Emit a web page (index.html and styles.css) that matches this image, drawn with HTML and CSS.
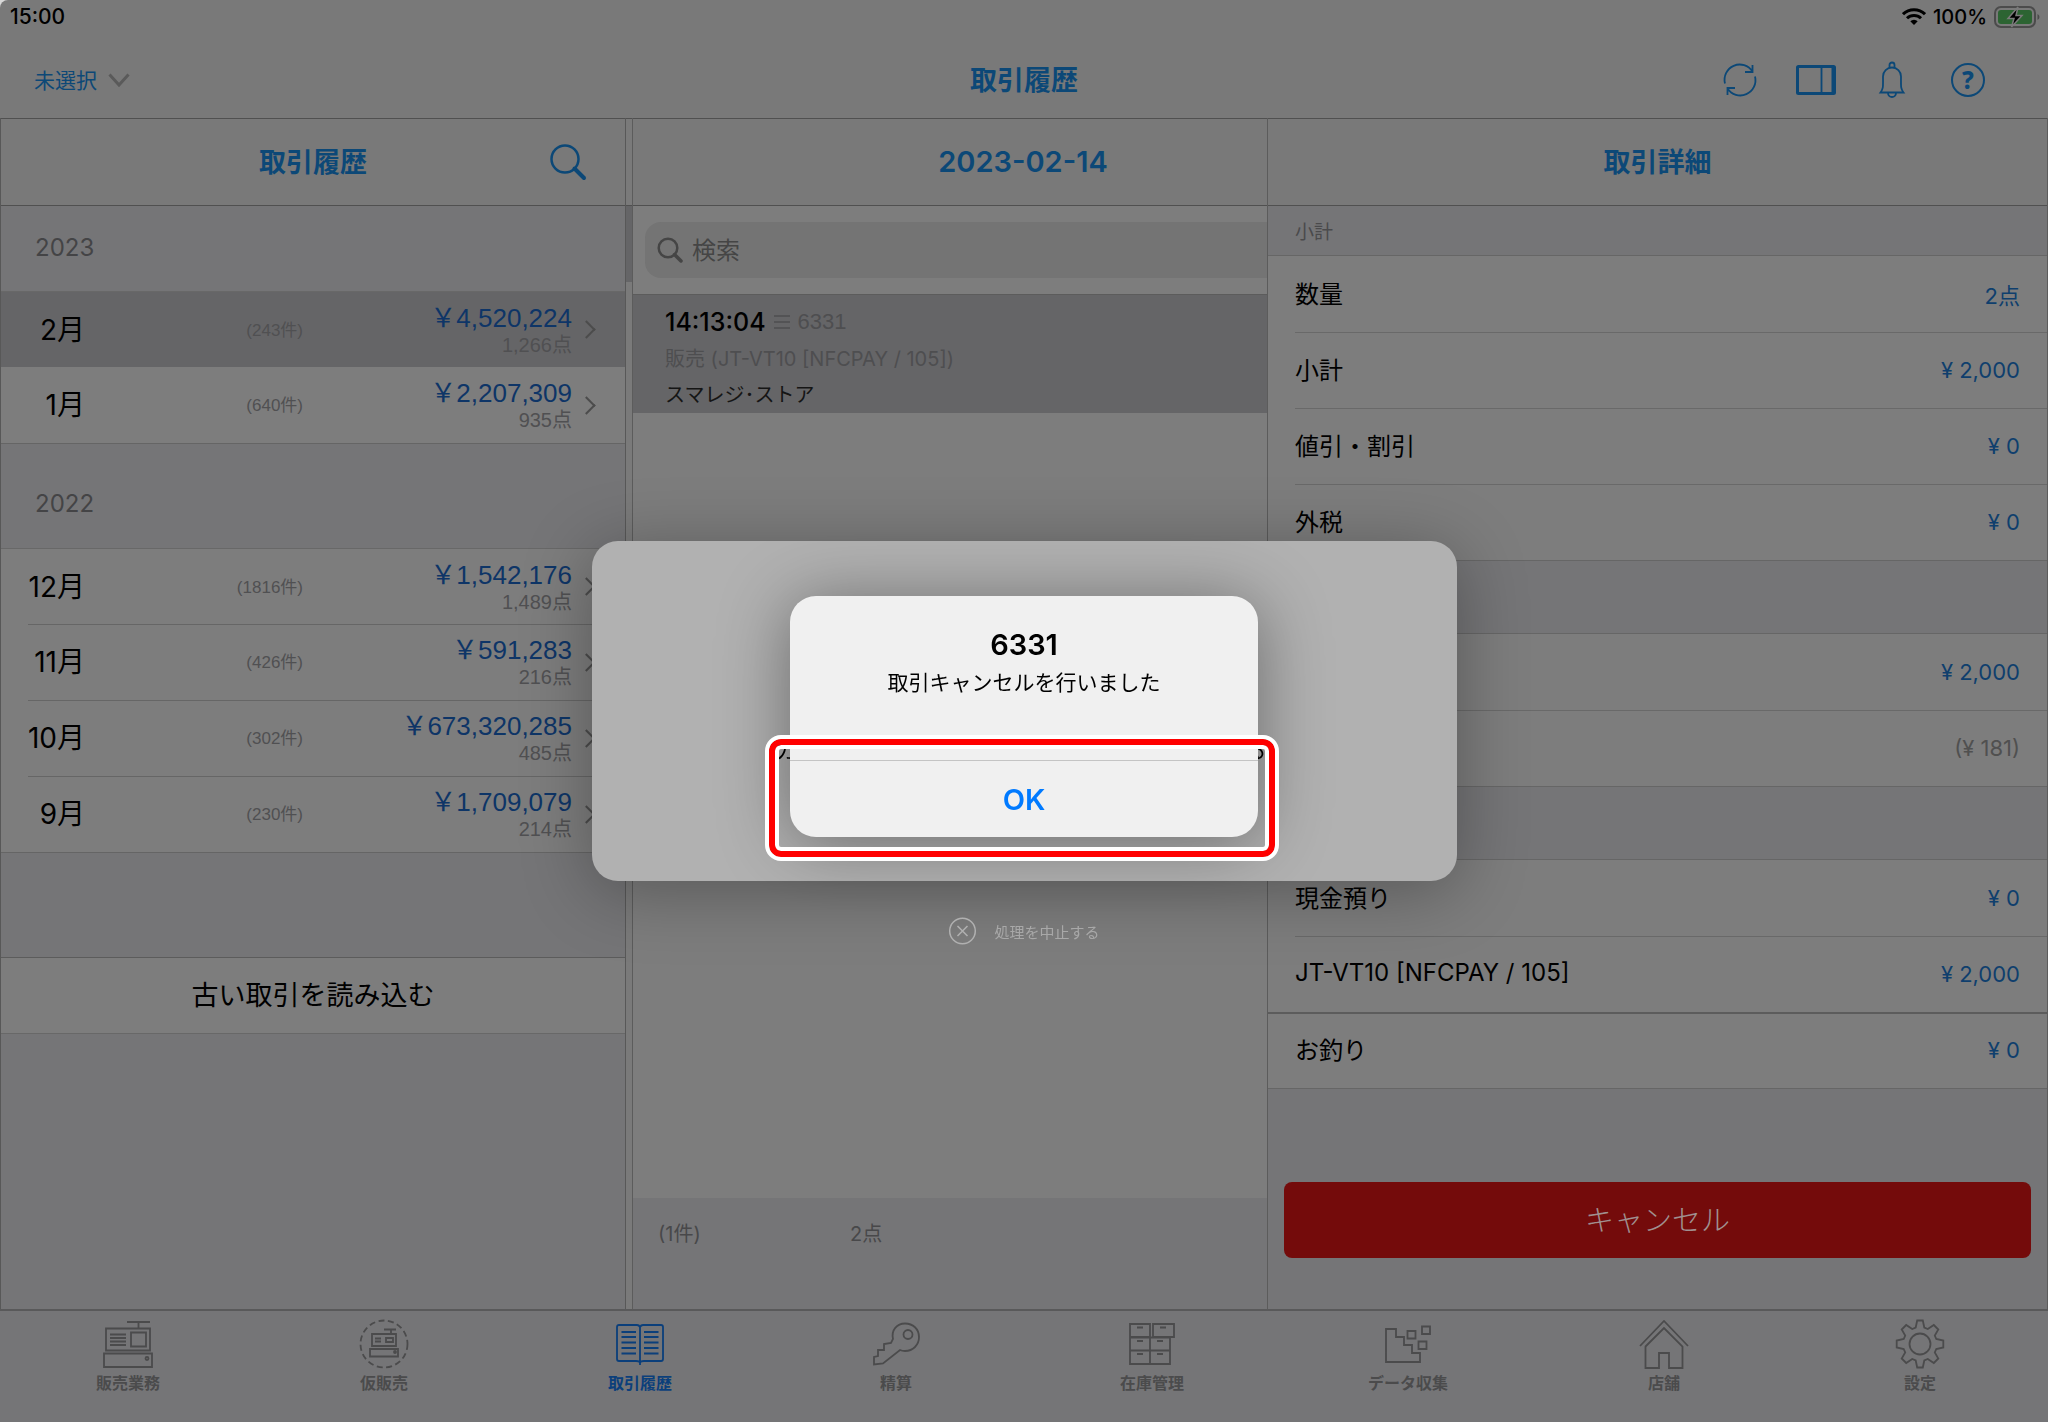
FILE: index.html
```
<!doctype html>
<html lang="ja">
<head>
  <meta charset="utf-8">
  <title>取引履歴</title>
  <link rel="stylesheet" href="styles.css">
</head>

<body>
  <div class="app">
    <header class="top">
      <div class="status">
        <span>15:00</span>
        <span class="status-right">
          <svg width="24" height="18" viewBox="0 0 24 18" fill="none" stroke="#000" stroke-width="3"><path d="M1 6.2a15.6 15.6 0 0 1 22 0M5 10.3a10 10 0 0 1 14 0"/><path d="M8.3 13.2a5.3 5.3 0 0 1 7.4 0L12 17z" fill="#000" stroke="none"/></svg>
          <span>100%</span>
          <svg class="battery" width="47" height="22" viewBox="0 0 47 22"><rect x="1" y="1" width="40" height="20" rx="6" fill="none" stroke="#4b4b4b" stroke-width="2"/><rect x="4" y="4" width="34" height="14" rx="3" fill="#2c6432"/><path d="M43.5 8v6q2-1 2-3t-2-3z" fill="#4b4b4b"/><path d="M24 1l-10 11.5h6L17.500 21 28 9.500h-6z" fill="#000" stroke="#7a7a7a" stroke-width="1.500"/></svg>
        </span>
      </div>
      <div class="titlebar">
        <div class="picker">
          <select aria-label="店舗の選択"><option>未選択</option></select>
          <svg width="22" height="16" viewBox="0 0 22 16" fill="none" stroke="#5a5a5a" stroke-width="3"><path d="M1.500 2.500L11 13l9.500-10.500"/></svg>
        </div>
        <h1>取引履歴</h1>
        <div class="tools">
          <button aria-label="更新"><svg width="36" height="36" viewBox="0 0 36 36"><path d="M3 21.500A15.200 15.200 0 0 1 30.500 9.500M33 14.500A15.200 15.200 0 0 1 5.500 26.500M30.500 3v7h-7.500M5.500 33v-7H13"/></svg></button>
          <button aria-label="表示"><svg width="40" height="30" viewBox="0 0 40 30"><rect x="1.500" y="1.500" width="37" height="27" rx="1" stroke-width="3"/><path d="M25.500 2v26"/><path d="M37 2v26" stroke-width="3"/></svg></button>
          <button aria-label="通知"><svg width="28" height="38" viewBox="0 0 28 38"><path d="M2.500 31.500c3-4 2.500-6 2.500-16a9 9 0 0 1 18 0c0 10-.5 12 2.500 16zM11.500 7V4a2.500 2.500 0 0 1 5 0v3M10 32a4 4 0 0 0 8 0"/></svg></button>
          <button aria-label="ヘルプ" class="help"><span>?</span></button>
        </div>
      </div>
    </header>

    <main class="columns">
      <section class="col col-left">
        <header class="col-head">
          <h2>取引履歴</h2>
          <button class="head-search" aria-label="検索"><svg width="38" height="38" viewBox="0 0 38 38" fill="none" stroke="#0c4877" stroke-width="2.500"><circle cx="16" cy="16" r="13.500"/><path d="M25.500 25.500l9.500 9.500" stroke-width="4" stroke-linecap="round"/></svg></button>
        </header>
        <h3 class="year">2023</h3>
        <ul class="months">
          <li class="selected"><button><b>2月</b><small>(243件)</small><span class="sum">￥4,520,224<em>1,266点</em></span><i></i></button></li>
          <li><button><b>1月</b><small>(640件)</small><span class="sum">￥2,207,309<em>935点</em></span><i></i></button></li>
        </ul>
        <h3 class="year year-next">2022</h3>
        <ul class="months">
          <li><button><b>12月</b><small>(1816件)</small><span class="sum">￥1,542,176<em>1,489点</em></span><i></i></button></li>
          <li><button><b>11月</b><small>(426件)</small><span class="sum">￥591,283<em>216点</em></span><i></i></button></li>
          <li><button><b>10月</b><small>(302件)</small><span class="sum">￥673,320,285<em>485点</em></span><i></i></button></li>
          <li><button><b>9月</b><small>(230件)</small><span class="sum">￥1,709,079<em>214点</em></span><i></i></button></li>
        </ul>
        <button class="load-old">古い取引を読み込む</button>
      </section>

      <div class="splitter"><div class="thumb"></div></div>

      <section class="col col-mid">
        <header class="col-head"><h2>2023-02-14</h2></header>
        <div class="search-area">
          <label class="search">
            <svg width="26" height="26" viewBox="0 0 26 26" fill="none" stroke="#454545" stroke-width="2.500"><circle cx="11" cy="11" r="9.300"/><path d="M17.500 17.500l6.500 6.500" stroke-width="3.500" stroke-linecap="round"/></svg>
            <input type="search" placeholder="検索" aria-label="検索">
          </label>
        </div>
        <article class="deal">
          <p class="deal-time">14:13:04 <svg width="18" height="16" viewBox="0 0 18 16" stroke="#4e4e50" stroke-width="1.500"><path d="M1 2h16M1 8h16M1 14h16"/></svg><span>6331</span></p>
          <p class="deal-type">販売 (JT-VT10 [NFCPAY / 105])</p>
          <p class="deal-store">スマレジ･ストア</p>
        </article>
        <div class="blank"></div>
        <footer class="totals"><span>(1件)</span><span>2点</span></footer>
      </section>

      <section class="col col-right">
        <header class="col-head"><h2>取引詳細</h2></header>
        <h3 class="sub">小計</h3>
        <dl class="rows">
          <div><dt>数量</dt><dd>2点</dd></div>
          <div><dt>小計</dt><dd>¥ 2,000</dd></div>
          <div><dt>値引・割引</dt><dd>¥ 0</dd></div>
          <div><dt>外税</dt><dd>¥ 0</dd></div>
        </dl>
        <dl class="rows">
          <div><dt></dt><dd>¥ 2,000</dd></div>
          <div><dt></dt><dd class="muted">(¥ 181)</dd></div>
        </dl>
        <dl class="rows">
          <div><dt>現金預り</dt><dd>¥ 0</dd></div>
          <div><dt>JT-VT10 [NFCPAY / 105]</dt><dd>¥ 2,000</dd></div>
          <div class="full"><dt>お釣り</dt><dd>¥ 0</dd></div>
        </dl>
        <button class="cancel">キャンセル</button>
      </section>
    </main>

    <nav class="tabs">
      <a href="#"><svg width="50" height="50" viewBox="0 0 50 50"><path d="M24 3h23M35.500 3v6"/><path d="M3 9.500h44v22H3zM28 13.500h15v14H28zM1 34.500h48V48H1zM7 15.500h16M7 19h16M7 22.500h16M7 26h16"/><circle cx="44" cy="39.500" r="1.500"/></svg>販売業務</a>
      <a href="#"><svg width="50" height="50" viewBox="0 0 50 50"><circle cx="25" cy="25" r="23.500" stroke-dasharray="6 3.500"/><path d="M25 10.500h12M32 11v4M13 15h24v12H13zM27 19h7v4h-7zM11 30h28v7.500H11zM16 19.500h6M16 22.500h6"/><circle cx="36" cy="33" r="1"/></svg>仮販売</a>
      <a href="#" class="current"><svg width="50" height="50" viewBox="0 0 50 50"><path d="M25 8v38M25 8q-1-2-3-2H4q-2 0-2 2v32q0 2 2 2h17q4 0 4 2 0-2 4-2h17q2 0 2-2V8q0-2-2-2H28q-2 0-3 2"/><path d="M6.500 13H21M6.500 18H21M6.500 23.500H21M6.500 29H21M6.500 34.500H21M29 13h14.500M29 18h14.500M29 23.500h14.500M29 29h14.500M29 34.500h14.500"/></svg>取引履歴</a>
      <a href="#"><svg width="50" height="50" viewBox="0 0 50 50"><path d="M22 20C20 11 26 4.500 34 4.500S48 10 48 18 42 32 34 32q-3 0-5-1L12 44.500l-9 1v-7.500l4-1v-6h6v-6l7-1z"/><circle cx="37" cy="15.500" r="4.500"/></svg>精算</a>
      <a href="#"><svg width="50" height="50" viewBox="0 0 50 50"><path d="M3 5h20v13H3zM26 5h21v13H26zM3 18.500h20v13H3zM23 18.500h20v13H23zM3 31.500h20V45H3zM23 31.500h20V45H23zM10 8.500h6M33 8.500h6M10 22h6M30 22h6M10 35h6M30 35h6"/></svg>在庫管理</a>
      <a href="#"><svg width="50" height="50" viewBox="0 0 50 50"><path d="M3 10h10v8h8v8h8v8h8v9H3zM24.500 12h8v7.500h-8zM39 7.500h8V15h-8zM35.500 22.500h8V30h-8z"/></svg>データ収集</a>
      <a href="#"><svg width="50" height="50" viewBox="0 0 50 50"><path d="M1 27L25 2l24 25M6.500 27.500L25 9l18.500 18.500V49H30V34H20v15H6.500z"/></svg>店舗</a>
      <a href="#"><svg width="50" height="50" viewBox="0 0 50 50"><circle cx="25" cy="25" r="10.500"/><path d="M22.200 1.500h5.600l1.500 7 3.500 1.500 6-4 4.500 4.500-3.500 6 1.500 3.500 7 1.500v7l-7 1.500-1.500 3.500 3.500 6-4.500 4.500-6-4-3.500 1.500-1.500 7h-5.600l-1.500-7-3.500-1.500-6 4-4.500-4.500 3.500-6-1.500-3.500-7-1.500v-7l7-1.500 1.500-3.500-3.500-6 4.500-4.500 6 4 3.500-1.500z"/></svg>設定</a>
    </nav>
  </div>

  <!-- payment panel with the result alert over it -->
  <div class="layer">
    <div class="panel">
      <p class="panel-text"><span>カ</span><span>る</span></p>
      <div class="alert" role="alertdialog" aria-labelledby="alert-title">
        <div class="alert-body">
          <h2 id="alert-title">6331</h2>
          <p>取引キャンセルを行いました</p>
        </div>
        <button class="ok">OK<span class="marker"></span></button>
      </div>
      <button class="abort"><svg width="28" height="28" viewBox="0 0 28 28" fill="none" stroke="#b0b0b0" stroke-width="1.500"><circle cx="14" cy="14" r="12.800"/><path d="M9 9l10 10M19 9L9 19"/></svg>処理を中止する</button>
    </div>
  </div>
</body>

</html>
```

FILE: styles.css
```
*{
  box-sizing: border-box;
}
html{
  background: #d8d8d8;
}
body{
  margin: 0;
  font-family: Inter, "Noto Sans CJK JP", sans-serif;
  color: #000;
}
h1, h2, h3, p, ul, dl, dd{
  margin: 0;
  padding: 0;
}
button, select, input{
  font: inherit;
  color: inherit;
  background: none;
  border: none;
  padding: 0;
  margin: 0;
}
svg{
  display: block;
  flex: none;
}
.app{
  display: flex;
  flex-direction: column;
  min-height: 100vh;
  background: #797979;
  border-top-left-radius: 8px;
  overflow: hidden;
}

/* top */
.top{
  height: 118px;
}
.status{
  display: flex;
  justify-content: space-between;
  height: 34px;
  padding: 0 10px;
  font-size: 21px;
  line-height: 34px;
  font-weight: 500;
}
.status-right{
  display: flex;
  align-items: center;
  gap: 7px;
  font-size: 20px;
}
.battery{
  margin-right: -3px;
}
.titlebar{
  display: grid;
  grid-template-columns: 1fr auto 1fr;
  align-items: center;
  height: 92px;
  color: #0c4877;
}
.picker{
  display: flex;
  align-items: center;
  gap: 8px;
  padding-left: 34px;
  font-size: 21px;
}
.picker select{
  appearance: none;
  width: 66px;
}
.titlebar h1{
  padding-bottom: 4px;
  font-size: 27px;
  font-weight: 700;
}
.tools{
  display: flex;
  justify-content: flex-end;
  padding-right: 42px;
}
.tools button{
  display: flex;
  align-items: center;
  justify-content: center;
  width: 76px;
  height: 44px;
}
.tools svg{
  fill: none;
  stroke: #0c4877;
  stroke-width: 1.8;
}
.help span{
  width: 34px;
  height: 34px;
  border: 2px solid #0c4877;
  border-radius: 50%;
  font-family: "Noto Sans", sans-serif;
  font-size: 24px;
  font-weight: 800;
  line-height: 30px;
}

/* columns */
.columns{
  flex: 1;
  display: grid;
  grid-template-columns: minmax(0, 626fr) 7px minmax(0, 634fr) minmax(0, 781fr);
}
.col{
  display: flex;
  flex-direction: column;
  background: #757577;
}
.col-left{
  border-left: 1px solid #585858;
  border-right: 1px solid #585858;
}
.col-right{
  border-left: 1px solid #5c5c5c;
  border-right: 1px solid #5c5c5c;
}
.col-head{
  display: grid;
  grid-template-columns: 76px 1fr 76px;
  align-items: center;
  height: 88px;
  background: #797979;
  border-top: 1px solid #505050;
  border-bottom: 1px solid #505050;
  color: #0c4877;
}
.col-head h2{
  grid-column: 2;
  padding-bottom: 4px;
  text-align: center;
  font-size: 27px;
  font-weight: 700;
}
/* the date sits in the middle of the window, under the title */
.col-mid .col-head{
  grid-template-columns: 222px 1fr 76px;
}
.col-mid .col-head h2{
  padding-bottom: 2px;
  font-size: 29px;
  font-weight: 600;
}
.year{
  height: 85px;
  padding-left: 34px;
  font-size: 24px;
  font-weight: 400;
  line-height: 84px;
  color: #444446;
}
.year-next{
  height: 104px;
  padding-top: 18px;
}
.months{
  list-style: none;
  background: #7d7d7d;
  border-top: 1px solid #686868;
  border-bottom: 1px solid #656565;
}
.months li + li{
  background: linear-gradient(#666, #666) 27px 0 / 100% 1px no-repeat;
}
.months .selected{
  background: #656567;
}
.months .selected + li{
  background: none;
}
.months button{
  display: grid;
  grid-template-columns: 84px 218px 1fr 53px;
  align-items: center;
  width: 100%;
  height: 76px;
  text-align: right;
}
.months li:first-child button{
  height: 75px;
}
.months b{
  padding-bottom: 4px;
  font-size: 28px;
  font-weight: 400;
}
.months small{
  padding-bottom: 3px;
  font-family: "Liberation Sans", "Noto Sans CJK JP", sans-serif;
  font-size: 17px;
  color: #505052;
}
.sum{
  padding-top: 2px;
  font-family: "Liberation Sans", "Noto Sans CJK JP", sans-serif;
  font-size: 26px;
  line-height: 28px;
  color: #0e3567;
}
.sum em{
  display: block;
  font-size: 20px;
  line-height: 26px;
  font-style: normal;
  color: #505052;
}
.months i{
  width: 13px;
  height: 13px;
  margin-left: 8px;
  border-top: 2px solid #4c4c4c;
  border-right: 2px solid #4c4c4c;
  transform: rotate(45deg);
}
.load-old{
  height: 77px;
  margin-top: 104px;
  padding-bottom: 4px;
  background: #7d7d7d;
  border-top: 1px solid #5c5c5c;
  border-bottom: 1px solid #686868;
  font-size: 27px;
}
.splitter{
  padding-top: 88px;
  background: linear-gradient(#505050, #505050) 0 0 / 100% 1px no-repeat, linear-gradient(#505050, #505050) 0 87px / 100% 1px no-repeat, #7a7a7a;
  border-right: 1px solid #5c5c5c;
}
.thumb{
  height: 76px;
  background: #656567;
}

/* middle */
.search-area{
  padding: 16px 0 16px 12px;
  background: #7d7d7d;
}
.search{
  display: flex;
  align-items: center;
  gap: 9px;
  height: 56px;
  padding-left: 12px;
  background: #747474;
  border-radius: 16px 0 0 16px;
}
.search input{
  flex: 1;
  min-width: 0;
  font-size: 24px;
  outline: none;
}
.search input::placeholder{
  color: #454545;
  opacity: 1;
}
.deal{
  height: 119px;
  padding: 9px 32px;
  background: #656567;
  border-top: 1px solid #5c5c5c;
  color: #4e4e50;
}
.deal-time{
  display: flex;
  align-items: center;
  gap: 7px;
  font-size: 25px;
  line-height: 36px;
  font-weight: 500;
  color: #000;
}
.deal-time span{
  font-family: "Liberation Sans", sans-serif;
  font-size: 22px;
  font-weight: 400;
  color: #4e4e50;
}
.deal-type{
  font-size: 20px;
  line-height: 38px;
}
.deal-store{
  font-size: 20px;
  line-height: 34px;
  color: #151515;
}
.blank{
  flex: 1;
  background: #7d7d7d;
}
.totals{
  display: grid;
  grid-template-columns: 192px 1fr;
  height: 111px;
  padding: 20px 25px;
  font-size: 20px;
  line-height: 32px;
  color: #48484a;
}

/* right */
.sub{
  height: 49px;
  padding-left: 27px;
  font-size: 19px;
  font-weight: 400;
  line-height: 54px;
  color: #4a4a4c;
}
.rows{
  background: #7d7d7d;
  border-top: 1px solid #666;
  border-bottom: 1px solid #666;
}
.rows + .rows{
  margin-top: 72px;
}
.rows div{
  display: flex;
  justify-content: space-between;
  align-items: center;
  height: 76px;
  padding: 0 27px;
}
.rows div + div{
  background: linear-gradient(#696969, #696969) 27px 0 / 100% 1px no-repeat;
}
.rows div.full{
  background: linear-gradient(#5c5c5c, #5c5c5c) 0 0 / 100% 2px no-repeat;
}
.rows dt{
  padding-bottom: 4px;
  font-size: 24px;
}
.rows dd{
  font-size: 22px;
  color: #0f3f6d;
}
.rows .muted{
  color: #505050;
}
.cancel{
  height: 76px;
  margin: 93px 16px 0;
  padding-bottom: 4px;
  background: #740b0b;
  border-radius: 8px;
  font-size: 29px;
  font-weight: 300;
  color: #a09090;
}

/* tabs */
.tabs{
  display: grid;
  grid-template-columns: repeat(8, 1fr);
  height: 113px;
  padding-top: 8px;
  background: #757577;
  border-top: 2px solid #59595a;
}
.tabs a{
  display: flex;
  flex-direction: column;
  align-items: center;
  font-size: 16px;
  line-height: 28px;
  font-weight: 700;
  color: #4b4b4c;
  text-decoration: none;
}
.tabs svg{
  fill: none;
  stroke: currentColor;
  stroke-width: 1.8;
}
.tabs .current{
  color: #0b3f7b;
}

/* dialogs */
.layer{
  position: fixed;
  inset: 0;
  display: flex;
  align-items: center;
  justify-content: center;
}
.panel{
  position: relative;
  display: flex;
  align-items: center;
  justify-content: center;
  width: 865px;
  height: 340px;
  padding-top: 11px;
  background: #b1b1b1;
  border-radius: 26px;
  box-shadow: 0 10px 70px rgba(0, 0, 0, .3);
}
.panel-text{
  position: absolute;
  top: 196px;
  left: 184px;
  right: 190px;
  display: flex;
  justify-content: space-between;
  font-size: 22px;
  line-height: 26px;
}
.alert{
  position: relative;
  width: 468px;
  background: #f0f0f0;
  border-radius: 26px;
  box-shadow: 0 6px 70px rgba(0, 0, 0, .4);
  text-align: center;
}
.alert-body{
  height: 164px;
  padding-top: 30px;
}
.alert h2{
  font-size: 29px;
  line-height: 38px;
  font-weight: 600;
}
.alert p{
  font-size: 21px;
  line-height: 38px;
}
.ok{
  position: relative;
  width: 100%;
  height: 77px;
  border-top: 1px solid #c4c4c4;
  font-size: 29px;
  font-weight: 600;
  color: #007aff;
}
.marker{
  position: absolute;
  inset: -22px -17px -20px -21px;
  border: 6px solid #f00;
  border-radius: 12px;
  outline: 4px solid #fff;
  box-shadow: inset 0 0 0 4px #fff;
}
.abort{
  position: absolute;
  top: 376px;
  left: 50%;
  display: flex;
  align-items: center;
  gap: 18px;
  transform: translateX(-50%);
  font-size: 15px;
  white-space: nowrap;
  color: #a8a8a8;
}
```
